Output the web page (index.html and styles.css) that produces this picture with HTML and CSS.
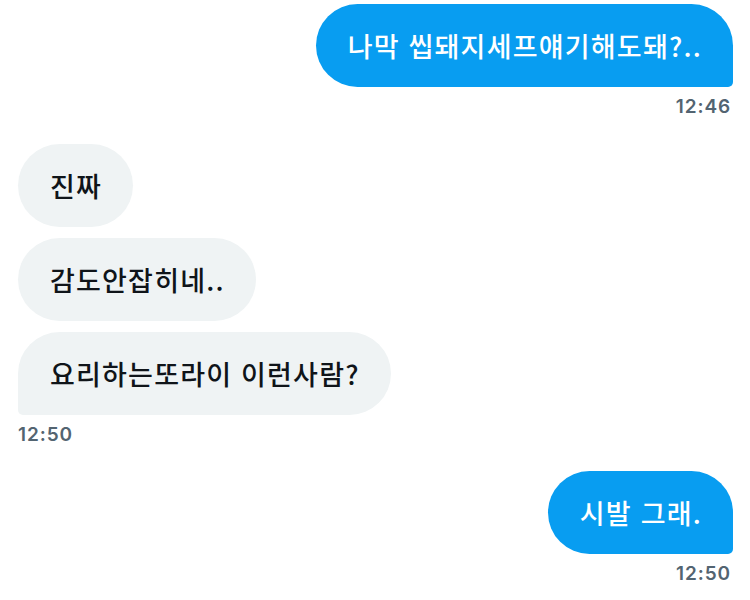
FILE: index.html
```html
<!DOCTYPE html>
<html lang="ko">
<head>
<meta charset="utf-8">
<link rel="stylesheet" href="styles.css">
</head>
<body>
<div class="chat">
  <div class="group sent">
    <div class="bubble sent-last">나막 씹돼지세프얘기해도돼?..</div>
    <div class="time">12:46</div>
  </div>
  <div class="group recv">
    <div class="bubble">진짜</div>
    <div class="bubble">감도안잡히네..</div>
    <div class="bubble recv-last">요리하는또라이 이런사람?</div>
    <div class="time">12:50</div>
  </div>
  <div class="group sent">
    <div class="bubble sent-last">시발 그래.</div>
    <div class="time">12:50</div>
  </div>
</div>
</body>
</html>
```
FILE: styles.css
```css
* { box-sizing: border-box; }
html, body { margin: 0; padding: 0; background: #ffffff; }
body { width: 750px; height: 600px; overflow: hidden; }
.chat {
  display: flex;
  flex-direction: column;
  padding: 4px 17px 0 18px;
}
.group {
  display: flex;
  flex-direction: column;
  gap: 11px;
}
.group.sent { align-items: flex-end; }
.group.recv { align-items: flex-start; margin-top: 26px; }
.group.recv + .group.sent { margin-top: 25px; }
.bubble {
  height: 83px;
  display: flex;
  align-items: center;
  padding: 0 31px 0 32px;
  border-radius: 42px;
  font-family: "Noto Sans CJK KR", sans-serif;
  font-size: 27px;
  font-weight: 500;
  letter-spacing: 1.2px;
  white-space: nowrap;
}
.sent .bubble { background: #089df1; color: #ffffff; }
.recv .bubble { background: #eff3f4; color: #0f1419; }
.sent-last { border-bottom-right-radius: 5px; }
.recv-last { border-bottom-left-radius: 5px; }
.time {
  font-family: "Inter", "Roboto", sans-serif;
  font-size: 19px;
  font-weight: 600;
  color: #536471;
  margin-top: -3px;
  line-height: 23px;
  letter-spacing: 0.9px;
}
.sent .time { margin-right: 2px; }
```
